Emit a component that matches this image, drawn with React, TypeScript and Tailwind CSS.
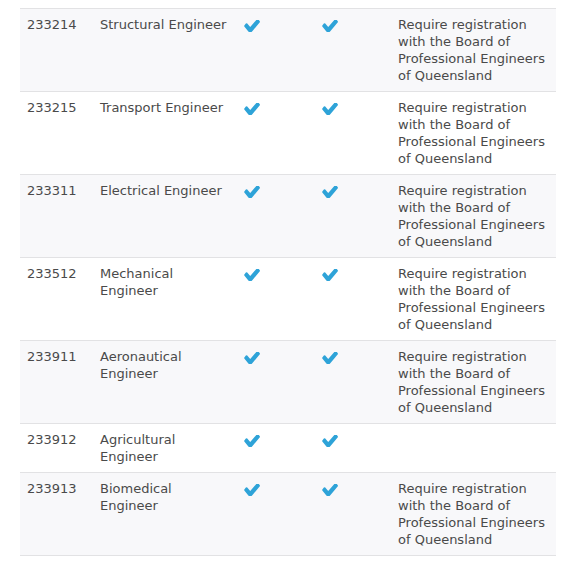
import React from "react";

const rows: { code: string; title: string[]; note: boolean }[] = [
  { code: "233214", title: ["Structural Engineer"], note: true },
  { code: "233215", title: ["Transport Engineer"], note: true },
  { code: "233311", title: ["Electrical Engineer"], note: true },
  { code: "233512", title: ["Mechanical", "Engineer"], note: true },
  { code: "233911", title: ["Aeronautical", "Engineer"], note: true },
  { code: "233912", title: ["Agricultural", "Engineer"], note: false },
  { code: "233913", title: ["Biomedical", "Engineer"], note: true },
];

function Check() {
  return (
    <svg
      width="16"
      height="12"
      viewBox="100 420 1580 1010"
      preserveAspectRatio="none"
      className="block mt-[4px] ml-[1px]"
    >
      <path
        fill="#2ea3d8"
        d="M1671 566q0 40-28 68l-724 724-136 136q-28 28-68 28t-68-28l-136-136-362-362q-28-28-28-68t28-68l136-136q28-28 68-28t68 28l294 295 656-657q28-28 68-28t68 28l136 136q28 28 28 68z"
      />
    </svg>
  );
}

export default function App() {
  return (
    <div className="w-[588px] h-[562px] bg-white pt-2 pl-5" style={{ fontFamily: '"DejaVu Sans", Verdana, sans-serif' }}>
      <table className="table-fixed border-collapse w-[536px] text-[13px] leading-[17px] text-[#4a4a4a]">
        <colgroup>
          <col className="w-[73px]" />
          <col className="w-[143px]" />
          <col className="w-[78px]" />
          <col className="w-[77px]" />
          <col className="w-[165px]" />
        </colgroup>
        <tbody>
          {rows.map((r, i) => (
            <tr
              key={r.code}
              className={`border-t border-b border-[#e2e2e4] align-top ${i % 2 === 0 ? "bg-[#f8f8fa]" : "bg-white"}`}
            >
              <td className="pl-[7px] pt-[7px] pb-[7px]">{r.code}</td>
              <td className="pl-[7px] pt-[7px] pb-[7px]">
                {r.title.map((t) => (
                  <div key={t}>{t}</div>
                ))}
              </td>
              <td className="pl-[7px] pt-[7px] pb-[7px]">
                <Check />
              </td>
              <td className="pl-[7px] pt-[7px] pb-[7px]">
                <Check />
              </td>
              <td className="pl-[7px] pr-[7px] pt-[7px] pb-[7px]">
                {r.note ? (
                  <>
                    <div>Require registration</div>
                    <div>with the Board of</div>
                    <div>Professional Engineers</div>
                    <div>of Queensland</div>
                  </>
                ) : null}
              </td>
            </tr>
          ))}
        </tbody>
      </table>
    </div>
  );
}
